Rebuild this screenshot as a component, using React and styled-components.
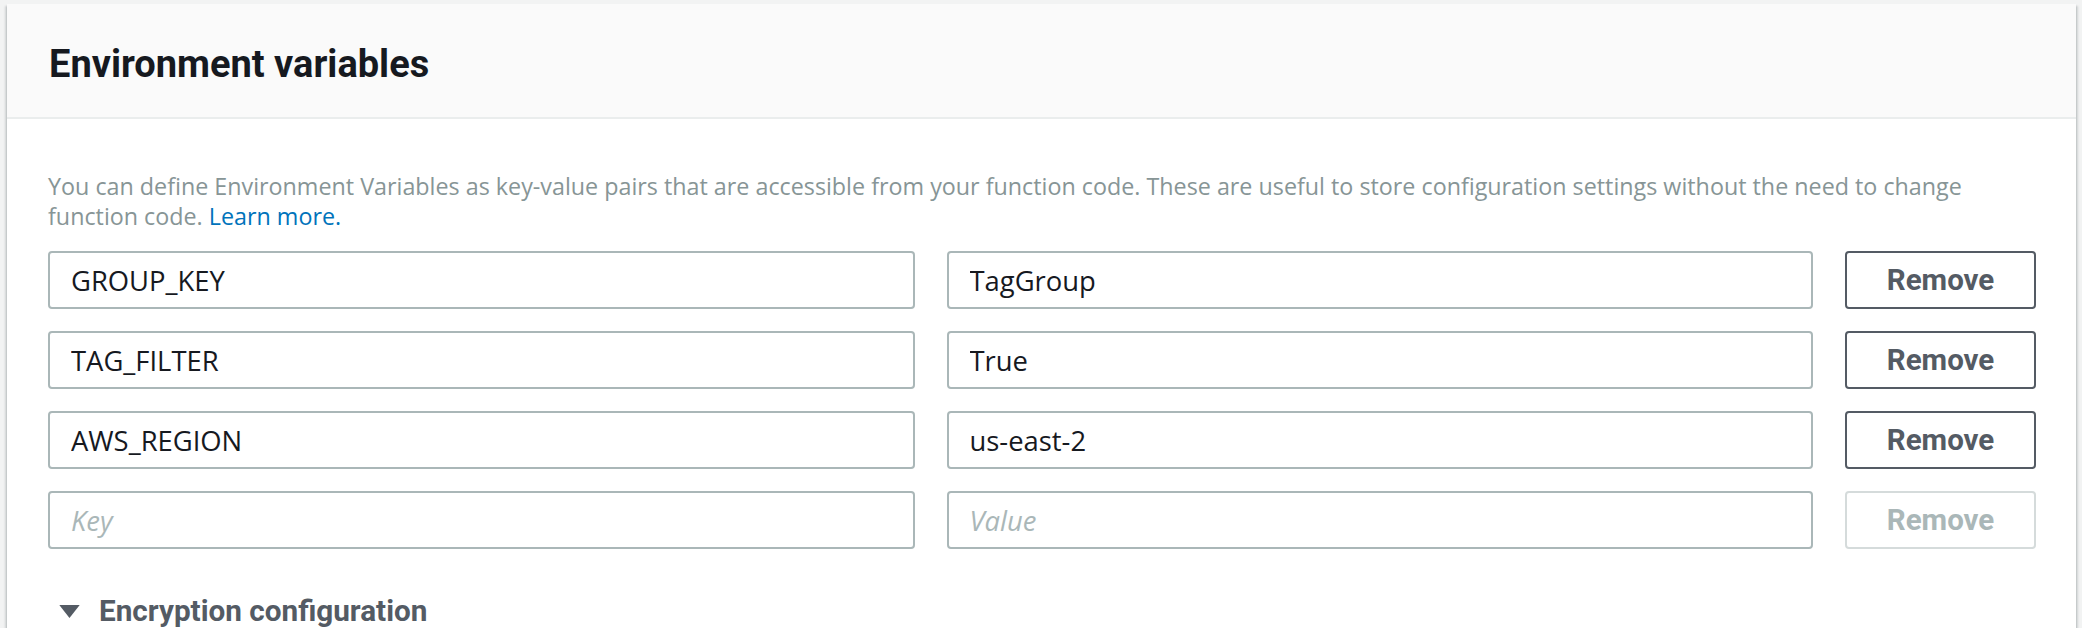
import React from 'react';
import styled, { createGlobalStyle } from 'styled-components';

// -------------------------------------------------

const rows = [
  { key: 'GROUP_KEY', value: 'TagGroup' },
  { key: 'TAG_FILTER', value: 'True' },
  { key: 'AWS_REGION', value: 'us-east-2' },
];

const App = () => {
  return (
    <>
      <GlobalStyle />
      <Panel>
        <Header>
          <Title>Environment variables</Title>
        </Header>
        <Body>
          <Description>
            You can define Environment Variables as key-value pairs that are accessible from your
            function code. These are useful to store configuration settings without the need to change
            <br />
            function code. <Link href="#">Learn more.</Link>
          </Description>
          <VarGrid>
            {rows.map((row) => (
              <React.Fragment key={row.key}>
                <Field defaultValue={row.key} />
                <Field defaultValue={row.value} />
                <RemoveButton>Remove</RemoveButton>
              </React.Fragment>
            ))}
            <Field placeholder="Key" />
            <Field placeholder="Value" />
            <RemoveButton disabled>Remove</RemoveButton>
          </VarGrid>
          <Expander>
            <Caret viewBox="0 0 22 14">
              <path d="M0 0 H22 L11 14 Z" fill="currentColor" />
            </Caret>
            <ExpanderLabel>Encryption configuration</ExpanderLabel>
          </Expander>
        </Body>
      </Panel>
    </>
  );
};

export default App;

// STYLING ----------------------------------------
const GlobalStyle = createGlobalStyle`
  html, body {
    margin: 0;
    background: #f2f3f3;
  }
  body {
    padding: 4px 6px 0 7px;
    font-family: 'Open Sans', 'Liberation Sans', sans-serif;
    overflow: hidden;
  }
`;

const Panel = styled.section`
  background: #fff;
  box-shadow: 0 2px 2px 0 rgba(0, 28, 36, 0.25), 2px 2px 2px 0 rgba(0, 28, 36, 0.12),
    -2px 2px 2px 0 rgba(0, 28, 36, 0.12);
  min-height: 700px;
`;

const Header = styled.header`
  display: flex;
  align-items: center;
  height: 115px;
  padding: 7px 42px 0;
  box-sizing: border-box;
  background: #fafafa;
  border-bottom: 2px solid #eaeded;
`;

const Title = styled.h2`
  margin: 0;
  font-family: Roboto, 'Liberation Sans', sans-serif;
  font-size: 38px;
  font-weight: 700;
  color: #16191f;
`;

const Body = styled.div`
  padding: 52px 40px 0 41px;
`;

const Description = styled.p`
  margin: 0 0 20px;
  font-size: 23.3px;
  line-height: 30px;
  color: #879596;
  white-space: nowrap;
`;

const Link = styled.a`
  color: #0073bb;
  text-decoration: none;
`;

const VarGrid = styled.div`
  display: grid;
  grid-template-columns: 1fr 1fr 191px;
  column-gap: 32px;
  row-gap: 22px;
`;

const Field = styled.input`
  box-sizing: border-box;
  height: 58px;
  width: 100%;
  padding: 0 21px;
  border: 2px solid #aab7b8;
  border-radius: 4px;
  font-family: 'Open Sans', 'Liberation Sans', sans-serif;
  font-size: 27.4px;
  color: #16191f;
  background: #fff;
  outline: none;

  &::placeholder {
    color: #aab7b8;
    font-style: italic;
  }
`;

const RemoveButton = styled.button`
  box-sizing: border-box;
  height: 58px;
  border: 2px solid ${(p) => (p.disabled ? '#d5dbdb' : '#545b64')};
  border-radius: 4px;
  background: #fff;
  font-family: Roboto, 'Liberation Sans', sans-serif;
  font-size: 29.5px;
  font-weight: 700;
  color: ${(p) => (p.disabled ? '#aab7b8' : '#545b64')};
  cursor: ${(p) => (p.disabled ? 'default' : 'pointer')};
`;

const Expander = styled.div`
  display: flex;
  align-items: center;
  margin-top: 44px;
  padding-left: 11px;
  color: #545b64;
`;

const Caret = styled.svg`
  width: 21px;
  height: 13px;
  margin-right: 19px;
`;

const ExpanderLabel = styled.span`
  font-family: Roboto, 'Liberation Sans', sans-serif;
  font-size: 29.7px;
  font-weight: 700;
  line-height: 36px;
`;
